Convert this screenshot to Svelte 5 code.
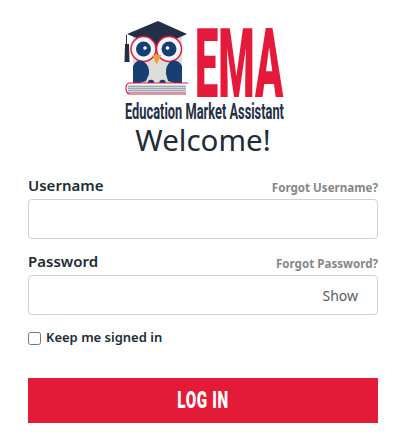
<script>
  let username = $state('');
  let password = $state('');
  let keep = $state(false);
</script>

<main class="page">
  <header class="brand">
    <svg class="logo" viewBox="118 15 170 110" width="170" height="110" role="img" aria-label="EMA logo">
      <path d="M133 34 L182 34 L182 72 Q182 86 157 86 Q133 86 133 72 Z" fill="#dcdcdc"/>
      <path d="M127 34 L158 21 L187 34 L158 47 Z" fill="#232f45"/>
      <path d="M126.500 35 V44" stroke="#232f45" stroke-width="1"/>
      <path d="M125 44 H129 L129.500 62 H124.500 Z" fill="#232f45"/>
      <circle cx="143.500" cy="49" r="12.500" fill="#f4f6f8" stroke="#e5193a" stroke-width="1.500"/>
      <circle cx="169" cy="49" r="12.500" fill="#f4f6f8" stroke="#e5193a" stroke-width="1.500"/>
      <circle cx="143.500" cy="49" r="7.500" fill="#173f74"/>
      <circle cx="169" cy="49" r="7.500" fill="#173f74"/>
      <circle cx="145" cy="48" r="1.800" fill="#fff"/>
      <circle cx="167.500" cy="48" r="1.800" fill="#fff"/>
      <path d="M152.500 55 H161 L156.500 65 Z" fill="#f0a330"/>
      <path d="M133 66 Q137 59 143 61 Q150 66 149 74 L146 81 Q139 84 133 84 Z" fill="#173f74"/>
      <path d="M182 66 Q178 59 171 61 Q165 66 166 74 L168 81 Q175 84 182 84 Z" fill="#173f74"/>
      <circle cx="151" cy="83" r="3.200" fill="#173f74"/>
      <circle cx="162.500" cy="83" r="3.200" fill="#173f74"/>
      <path d="M188 83 H130 Q126 83 126 88 Q126 94 130 94 H186" fill="#fff" stroke="#e5193a" stroke-width="1.200"/>
      <path d="M128 85.500 H186 V93 H128 Z" fill="#a4a8b0"/>
      <path d="M128 87.500 H186 M128 89.500 H186 M128 91.500 H186" stroke="#e4e6ea" stroke-width="0.700"/>
      <text class="ema" transform="translate(195 97) scale(.45 1)" textLength="196" lengthAdjust="spacingAndGlyphs">EMA</text>
      <text class="tagline" transform="translate(125 118.500) scale(.55 1)" textLength="289" lengthAdjust="spacingAndGlyphs">Education Market Assistant</text>
    </svg>
    <h1>Welcome!</h1>
  </header>

  <form class="form" onsubmit={(e) => e.preventDefault()}>
    <div class="label-row">
      <label for="username">Username</label>
      <a href="#username">Forgot Username?</a>
    </div>
    <input id="username" type="text" bind:value={username} />

    <div class="label-row second">
      <label for="password">Password</label>
      <a href="#password">Forgot Password?</a>
    </div>
    <div class="password">
      <input id="password" type="password" bind:value={password} />
      <button type="button" class="show">Show</button>
    </div>

    <label class="keep">
      <input type="checkbox" bind:checked={keep} />
      <span>Keep me signed in</span>
    </label>

    <button type="submit" class="login"><span>LOG IN</span></button>
  </form>
</main>

<style>
  :global(body) {
    margin: 0;
    background: #fff;
  }

  .page {
    width: 409px;
    height: 443px;
    box-sizing: border-box;
    padding: 15px 31px 0 28px;
    font-family: "Noto Sans", "Open Sans", sans-serif;
    color: #212b36;
    overflow: hidden;
  }

  .brand {
    display: flex;
    flex-direction: column;
    align-items: center;
  }

  .logo {
    display: block;
    overflow: visible;
  }

  .ema {
    font-family: "Roboto", sans-serif;
    font-weight: 900;
    font-size: 97px;
    fill: #e5193a;
  }

  .tagline {
    font-family: "Roboto", sans-serif;
    font-weight: 700;
    font-size: 22px;
    fill: #232f45;
  }

  h1 {
    margin: -5px 0 0;
    font-family: "Noto Sans", sans-serif;
    font-weight: 400;
    font-size: 29.500px;
    line-height: 40px;
    color: #212b36;
  }

  .form {
    display: flex;
    flex-direction: column;
    margin-top: 16px;
  }

  .label-row {
    display: flex;
    justify-content: space-between;
    align-items: flex-end;
    height: 20px;
    margin-bottom: 3px;
  }

  .label-row.second {
    margin-top: 13px;
  }

  .label-row label {
    font-size: 15px;
    font-weight: 600;
    line-height: 22px;
    color: #212b36;
  }

  .label-row a {
    margin-bottom: -1px;
    font-size: 11.600px;
    font-weight: 700;
    line-height: 18px;
    color: #85878a;
    text-decoration: none;
  }

  input[type="text"],
  input[type="password"] {
    display: block;
    width: 100%;
    height: 40px;
    box-sizing: border-box;
    border: 1px solid #cdd2da;
    border-radius: 4px;
    background: #fff;
    outline: none;
    padding: 0 12px;
    font: inherit;
  }

  .password {
    position: relative;
  }

  .show {
    position: absolute;
    right: 8px;
    top: 0;
    height: 40px;
    padding: 0 12px;
    border: 0;
    background: transparent;
    font-family: "Noto Sans", sans-serif;
    font-size: 14px;
    color: #555c66;
  }

  .keep {
    display: flex;
    align-items: center;
    gap: 5px;
    margin-top: 12px;
    height: 20px;
    font-size: 13px;
    font-weight: 600;
    color: #212b36;
  }

  .keep span {
    margin-top: -1px;
  }

  .keep input {
    width: 13px;
    height: 13px;
    margin: 2px 0 0;
  }

  .login {
    height: 45px;
    margin-top: 31px;
    border: 0;
    background: #e31b38;
    color: #fff;
    font-family: "Roboto", sans-serif;
    font-weight: 900;
    font-size: 23px;
    letter-spacing: 1px;
  }

  .login span {
    display: inline-block;
    transform: scaleX(0.66);
  }
</style>
